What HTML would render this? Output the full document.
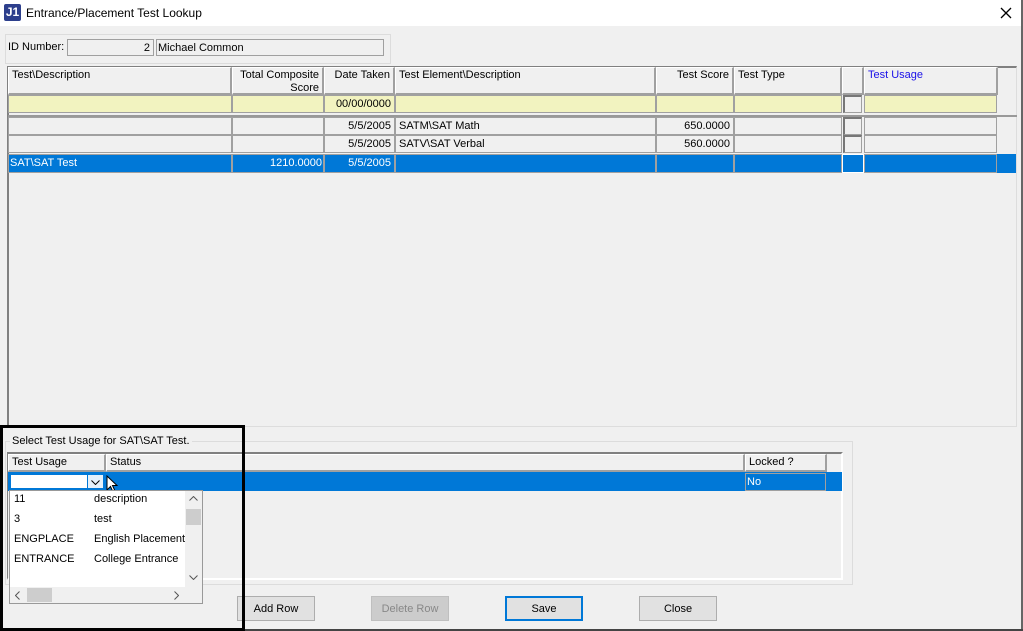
<!DOCTYPE html>
<html><head><style>
*{box-sizing:border-box;margin:0;padding:0}
body{width:1023px;height:631px;background:#f0f0f0;font-family:"Liberation Sans",Arial,sans-serif;font-size:11px;color:#000;position:relative;overflow:hidden}
.a{position:absolute}
.c{position:absolute;border:1px solid #a0a0a0;background:#f0f0f0;white-space:nowrap;overflow:hidden;padding:1px 3px;line-height:14px}
.y{background:#f2f3c0}
.r{text-align:right}
.h{position:absolute;background:#f0f0f0;border-right:2px solid #a0a0a0;border-bottom:2px solid #a0a0a0;border-top:1px solid #fff;border-left:1px solid #fff;padding:1px 3px;line-height:13px;overflow:hidden}
.s{background:#0078d7;color:#fff;border-color:#a0a0a0}
.btn{position:absolute;height:25px;width:78px;background:#e1e1e1;border:1px solid #adadad;text-align:center;line-height:24px;font-size:11px}
</style></head><body>
<div class="a" style="left:0;top:0;width:1023px;height:26px;background:#fff"></div>
<div class="a" style="left:4px;top:4px;width:17px;height:17px;background:#2d3f8c;color:#fff;font-weight:bold;font-size:12px;line-height:17px;text-align:center;border-radius:2px">J1</div>
<div class="a" style="left:26px;top:6px;font-size:12px">Entrance/Placement Test Lookup</div>
<svg class="a" style="left:1000px;top:7px" width="12" height="12"><path d="M1 1L11 11M11 1L1 11" stroke="#000" stroke-width="1.3"/></svg>
<div class="a" style="left:1021px;top:0;width:2px;height:631px;background:#666"></div>
<div class="a" style="left:0;top:629px;width:1023px;height:2px;background:#444"></div>

<div class="a" style="left:5px;top:34px;width:386px;height:30px;border:1px solid #dcdcdc"></div>
<div class="a" style="left:8px;top:41px">ID Number:</div>
<div class="c r" style="left:67px;top:39px;width:87px;height:17px">2</div>
<div class="c" style="left:156px;top:39px;width:228px;height:17px;padding-left:1px">Michael Common</div>

<div class="a" style="left:7px;top:66px;width:1010px;height:361px;border-left:2px solid #808080;border-top:2px solid #808080;border-right:1px solid #ddd;border-bottom:1px solid #ddd"></div>
<div class="h" style="left:8px;top:67px;width:224px;height:28px">Test\Description</div>
<div class="h r" style="left:232px;top:67px;width:92px;height:28px">Total Composite Score</div>
<div class="h r" style="left:324px;top:67px;width:71px;height:28px">Date Taken</div>
<div class="h" style="left:395px;top:67px;width:261px;height:28px">Test Element\Description</div>
<div class="h r" style="left:656px;top:67px;width:78px;height:28px">Test Score</div>
<div class="h" style="left:734px;top:67px;width:108px;height:28px">Test Type</div>
<div class="h" style="left:842px;top:67px;width:22px;height:28px"></div>
<div class="h" style="left:864px;top:67px;width:134px;height:28px;color:#1a10e8">Test Usage</div>

<div class="c y" style="left:8px;top:95px;width:224px;height:18px"></div>
<div class="c y" style="left:232px;top:95px;width:92px;height:18px"></div>
<div class="c y r" style="left:324px;top:95px;width:71px;height:18px">00/00/0000</div>
<div class="c y" style="left:395px;top:95px;width:261px;height:18px"></div>
<div class="c y" style="left:656px;top:95px;width:78px;height:18px"></div>
<div class="c y" style="left:734px;top:95px;width:108px;height:18px"></div>
<div class="c" style="left:843px;top:95px;width:19px;height:18px;border-left:2px solid #777;border-top:2px solid #777"></div>
<div class="c y" style="left:864px;top:95px;width:133px;height:18px"></div>
<div class="a" style="left:8px;top:115px;width:1009px;height:2px;background:#999"></div>

<div class="c" style="left:8px;top:117px;width:224px;height:18px"></div>
<div class="c" style="left:232px;top:117px;width:92px;height:18px"></div>
<div class="c r" style="left:324px;top:117px;width:71px;height:18px">5/5/2005</div>
<div class="c" style="left:395px;top:117px;width:261px;height:18px">SATM\SAT Math</div>
<div class="c r" style="left:656px;top:117px;width:78px;height:18px">650.0000</div>
<div class="c" style="left:734px;top:117px;width:108px;height:18px"></div>
<div class="c" style="left:843px;top:117px;width:19px;height:18px;border-left:2px solid #777;border-top:2px solid #777"></div>
<div class="c" style="left:864px;top:117px;width:133px;height:18px"></div>

<div class="c" style="left:8px;top:135px;width:224px;height:18px"></div>
<div class="c" style="left:232px;top:135px;width:92px;height:18px"></div>
<div class="c r" style="left:324px;top:135px;width:71px;height:18px">5/5/2005</div>
<div class="c" style="left:395px;top:135px;width:261px;height:18px">SATV\SAT Verbal</div>
<div class="c r" style="left:656px;top:135px;width:78px;height:18px">560.0000</div>
<div class="c" style="left:734px;top:135px;width:108px;height:18px"></div>
<div class="c" style="left:843px;top:135px;width:19px;height:18px;border-left:2px solid #777;border-top:2px solid #777"></div>
<div class="c" style="left:864px;top:135px;width:133px;height:18px"></div>

<div class="a" style="left:8px;top:154px;width:1008px;height:19px;background:#0078d7"></div>
<div class="c s" style="left:8px;top:154px;width:224px;height:19px;padding-left:1px">SAT\SAT Test</div>
<div class="c s r" style="left:232px;top:154px;width:92px;height:19px;padding-right:1px">1210.0000</div>
<div class="c s r" style="left:324px;top:154px;width:71px;height:19px">5/5/2005</div>
<div class="c s" style="left:395px;top:154px;width:261px;height:19px"></div>
<div class="c s" style="left:656px;top:154px;width:78px;height:19px"></div>
<div class="c s" style="left:734px;top:154px;width:108px;height:19px"></div>
<div class="c s" style="left:842px;top:154px;width:22px;height:19px;border:1px solid #fff"></div>
<div class="c s" style="left:864px;top:154px;width:133px;height:19px"></div>

<div class="a" style="left:5px;top:441px;width:848px;height:144px;border:1px solid #dcdcdc"></div>
<div class="a" style="left:10px;top:435px;background:#f0f0f0;padding:0 2px">Select Test Usage for SAT\SAT Test.</div>
<div class="a" style="left:7px;top:452px;width:836px;height:128px;border-top:2px solid #808080;border-left:1px solid #808080;border-right:2px solid #fff;border-bottom:2px solid #fff"></div>
<div class="h" style="left:8px;top:454px;width:98px;height:18px">Test Usage</div>
<div class="h" style="left:106px;top:454px;width:639px;height:18px">Status</div>
<div class="h" style="left:745px;top:454px;width:82px;height:18px">Locked ?</div>
<div class="a" style="left:8px;top:472px;width:834px;height:19px;background:#0078d7"></div>
<div class="c s" style="left:745px;top:473px;width:81px;height:18px;padding-left:1px">No</div>
<div class="a" style="left:10px;top:474px;width:78px;height:15px;background:#fff;border:1px solid #0078d7"></div>
<div class="a" style="left:87px;top:474px;width:17px;height:15px;background:#e5f1fb;border:1px solid #0078d7"></div>
<svg class="a" style="left:91px;top:480px" width="9" height="5"><path d="M0.5 0.5L4.5 4.5L8.5 0.5" stroke="#000" fill="none"/></svg>
<svg class="a" style="left:106px;top:475px" width="14" height="20" viewBox="0 0 14 20"><path d="M1 1 L1 15 L4.5 11.5 L7 17 L9 16 L6.5 10.5 L11 10.5 Z" fill="#fff" stroke="#000"/></svg>

<div class="a" style="left:9px;top:490px;width:194px;height:114px;background:#fff;border:1px solid #999"></div>
<div class="a" style="left:14px;top:489px;line-height:20px">11<br>3<br>ENGPLACE<br>ENTRANCE</div>
<div class="a" style="left:94px;top:489px;line-height:20px;white-space:nowrap">description<br>test<br>English Placement<br>College Entrance</div>
<div class="a" style="left:185px;top:491px;width:17px;height:96px;background:#f0f0f0"></div>
<div class="a" style="left:186px;top:509px;width:15px;height:16px;background:#cdcdcd"></div>
<svg class="a" style="left:189px;top:496px" width="9" height="5"><path d="M0.5 4.5L4.5 0.5L8.5 4.5" stroke="#555" fill="none"/></svg>
<svg class="a" style="left:189px;top:575px" width="9" height="5"><path d="M0.5 0.5L4.5 4.5L8.5 0.5" stroke="#555" fill="none"/></svg>
<div class="a" style="left:10px;top:587px;width:192px;height:16px;background:#f0f0f0"></div>
<div class="a" style="left:27px;top:588px;width:25px;height:14px;background:#cdcdcd"></div>
<svg class="a" style="left:15px;top:591px" width="5" height="9"><path d="M4.5 0.5L0.5 4.5L4.5 8.5" stroke="#555" fill="none"/></svg>
<svg class="a" style="left:174px;top:591px" width="5" height="9"><path d="M0.5 0.5L4.5 4.5L0.5 8.5" stroke="#555" fill="none"/></svg>

<div class="btn" style="left:237px;top:596px">Add Row</div>
<div class="btn" style="left:371px;top:596px;color:#888;background:#ccc;border-color:#bfbfbf">Delete Row</div>
<div class="btn" style="left:505px;top:596px;border:2px solid #0078d7;line-height:22px">Save</div>
<div class="btn" style="left:639px;top:596px">Close</div>

<div class="a" style="left:0;top:425px;width:245px;height:206px;border:3px solid #000"></div>
</body></html>
